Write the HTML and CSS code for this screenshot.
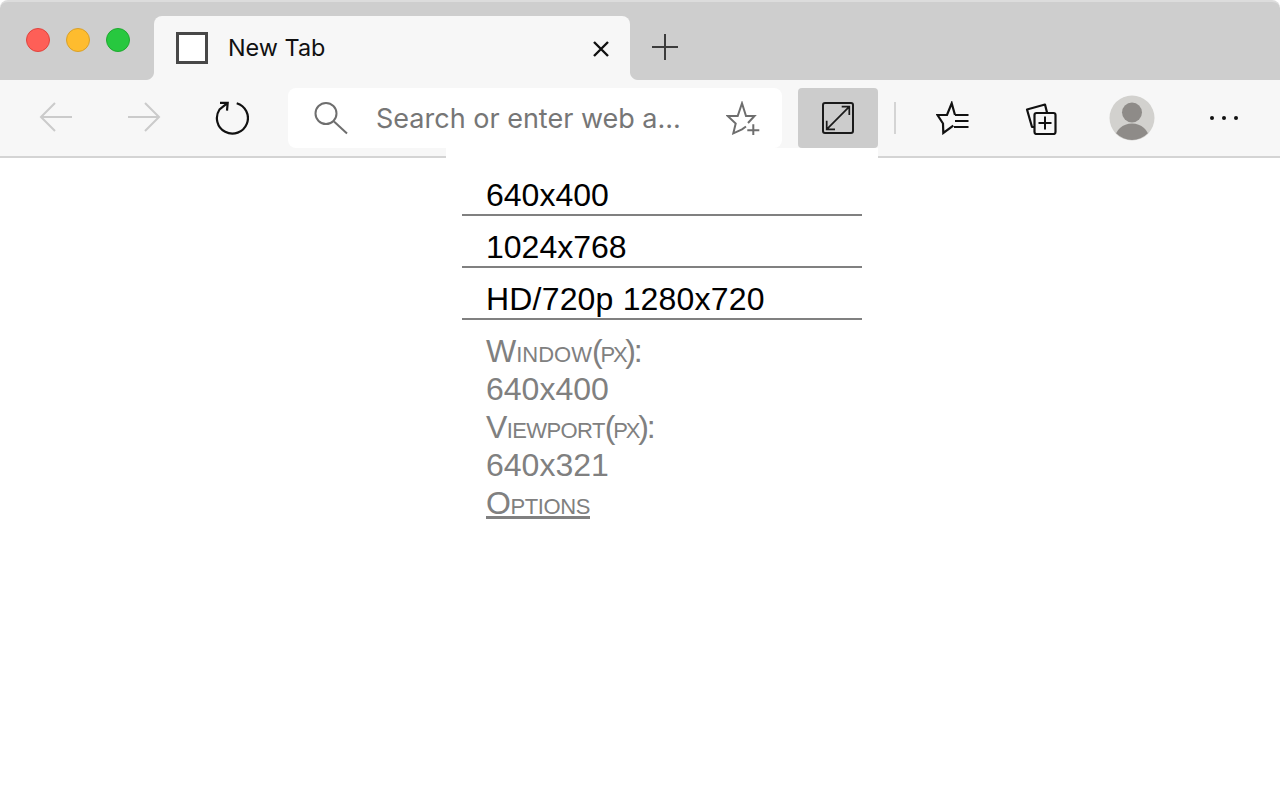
FILE: index.html
```html
<!DOCTYPE html>
<html lang="en">
<head>
<meta charset="utf-8">
<title>New Tab</title>
<link rel="stylesheet" href="styles.css">
</head>
<body>
<div class="window">
  <header class="tabstrip">
    <div class="lights">
      <span class="light red"></span>
      <span class="light yellow"></span>
      <span class="light green"></span>
    </div>
    <div class="tab">
      <span class="tab-favicon"></span>
      <span class="tab-title">New Tab</span>
      <svg class="tab-close" width="20" height="20" viewBox="0 0 20 20"><path d="M3 3l14 14M17 3L3 17" fill="none" stroke="#111" stroke-width="2.400"/></svg>
    </div>
    <svg class="new-tab" width="28" height="28" viewBox="0 0 28 28"><path d="M14 1v26M1 14h26" fill="none" stroke="#3c3c3c" stroke-width="2"/></svg>
  </header>
  <nav class="toolbar">
    <div class="tool">
      <svg class="arrow" width="34" height="30" viewBox="0 0 34 30"><path d="M33 15H2M16 1L2 15l14 14" fill="none" stroke="#cbcbcb" stroke-width="2"/></svg>
    </div>
    <div class="tool">
      <svg class="arrow" width="34" height="30" viewBox="0 0 34 30"><path d="M1 15h31M18 1l14 14-14 14" fill="none" stroke="#cbcbcb" stroke-width="2"/></svg>
    </div>
    <div class="tool">
      <svg width="34" height="36" viewBox="0 0 34 36"><path d="M21.700 3.200A15.500 15.500 0 1 1 4.500 9.500L12.700 2.800M5 2.800H12.700L12 10.700" fill="none" stroke="#111" stroke-width="2.200"/></svg>
    </div>
    <div class="address">
      <svg class="search-icon" width="34" height="34" viewBox="0 0 34 34"><circle cx="12" cy="12.500" r="10.500" fill="none" stroke="#6e6e6e" stroke-width="2"/><path d="M20 20.500L33 32.500" stroke="#6e6e6e" stroke-width="2"/></svg>
      <span class="address-text">Search or enter web a...</span>
      <svg class="star-add" width="34" height="34" viewBox="0 0 34 34"><path d="M20 25.500L16 28.300 7.300 32.300 9.700 22.500 1.700 15H11.700L16 2.300 20 15H28.500L22 22" fill="none" stroke="#6e6e6e" stroke-width="2"/><path d="M27.300 23.300v12M21.300 29.300h12" stroke="#6e6e6e" stroke-width="2"/></svg>
    </div>
    <div class="ext-button">
      <svg width="32" height="32" viewBox="0 0 32 32"><rect x="1" y="1" width="30" height="30" rx="2" fill="none" stroke="#1a1a1a" stroke-width="2"/><path d="M4.700 27.300L27.300 4.700M19.700 4.700H27.300V13M4.700 18.700V27.300H13" fill="none" stroke="#1a1a1a" stroke-width="1.700"/></svg>
    </div>
    <span class="separator"></span>
    <div class="tool">
      <svg width="34" height="34" viewBox="0 0 34 34"><path d="M19 14L15.700 2.300 11 14H1.500L7 22.500 7.300 32 17.300 24.700" fill="none" stroke="#111" stroke-width="2.200"/><path d="M19 14h13.500M19 20h13.500M18 26h14.500" stroke="#111" stroke-width="2.200"/></svg>
    </div>
    <div class="tool">
      <svg width="34" height="34" viewBox="0 0 34 34"><path d="M10 26H8L3 8.500 21 3.500 23 11.500" fill="none" stroke="#111" stroke-width="2.200" stroke-linejoin="round"/><rect x="10.500" y="12" width="21" height="21" rx="2" fill="none" stroke="#111" stroke-width="2.200"/><path d="M21 15.500v13M14.500 22h13" stroke="#111" stroke-width="2"/></svg>
    </div>
    <div class="tool profile">
      <svg width="46" height="46" viewBox="0 0 46 46"><defs><clipPath id="avatar"><circle cx="23" cy="23" r="22"/></clipPath></defs><circle cx="23" cy="23" r="22.500" fill="#d2d1ce"/><g clip-path="url(#avatar)" fill="#8e8b88"><circle cx="23" cy="17.500" r="10"/><ellipse cx="23" cy="44" rx="17" ry="15.500"/></g></svg>
    </div>
    <div class="tool more">
      <svg width="30" height="6" viewBox="0 0 30 6"><g fill="#111"><circle cx="3" cy="3" r="2"/><circle cx="15" cy="3" r="2"/><circle cx="27" cy="3" r="2"/></g></svg>
    </div>
  </nav>
  <main class="page"></main>
  <section class="popup">
    <ul class="sizes">
      <li class="size">640x400</li>
      <li class="size">1024x768</li>
      <li class="size size-long">HD/720p 1280x720</li>
    </ul>
    <div class="info">
      <div>Window<span class="unit">(px)</span>:</div>
      <div class="num">640x400</div>
      <div><span class="word">Viewport</span><span class="unit">(px)</span>:</div>
      <div class="num">640x321</div>
      <a class="options" href="#">Options</a>
    </div>
  </section>
</div>
</body>
</html>
```
FILE: styles.css
```css
* { box-sizing: border-box; }
html, body { margin: 0; padding: 0; background: #fff; }
.window { position: relative; width: 1280px; height: 800px; overflow: hidden; background: #fff; }

.tabstrip {
  display: flex;
  align-items: flex-end;
  height: 80px;
  background: #cecece;
  border-top: 2px solid #dcdcdc;
  border-radius: 8px 8px 0 0;
}
.lights { display: flex; gap: 16px; width: 154px; height: 64px; padding: 12px 0 0 26px; flex: none; }
.light { width: 24px; height: 24px; border-radius: 50%; border: 1px solid; }
.red { background: #fe5f57; border-color: #e0443e; }
.yellow { background: #febc2e; border-color: #d8a02a; }
.green { background: #27c83f; border-color: #1fa92f; }

.tab {
  position: relative;
  display: flex;
  align-items: center;
  flex: none;
  width: 476px;
  height: 64px;
  padding: 0 19px 0 22px;
  background: #f7f7f7;
  border-radius: 8px 8px 0 0;
  font: 23.400px "Inter", "Liberation Sans", sans-serif;
  color: #111;
}
.tab::before, .tab::after {
  content: "";
  position: absolute;
  bottom: 0;
  width: 8px;
  height: 8px;
}
.tab::before { left: -8px; background: radial-gradient(circle at 0 0, #cecece 7.500px, #f7f7f7 8.500px); }
.tab::after { right: -8px; background: radial-gradient(circle at 100% 0, #cecece 7.500px, #f7f7f7 8.500px); }
.tab-favicon { width: 32px; height: 32px; background: #fff; border: 3px solid #484848; flex: none; }
.tab-title { margin: 0 0 2px 20px; flex: 1; }
.tab-close { flex: none; margin-top: 1px; }
.new-tab { margin: 0 0 19px 21px; flex: none; }

.toolbar {
  display: flex;
  align-items: center;
  height: 78px;
  padding: 8px 12px;
  background: #f7f7f7;
  border-bottom: 2px solid #d4d4d4;
}
.tool { display: flex; align-items: center; justify-content: center; width: 88px; height: 60px; flex: none; }
.arrow { margin-bottom: 2px; }
.address {
  display: flex;
  align-items: center;
  width: 494px;
  height: 60px;
  margin-left: 12px;
  padding: 0 22px 0 26px;
  background: #fff;
  border-radius: 8px;
  flex: none;
}
.search-icon { flex: none; }
.address-text { flex: 1; margin-left: 28px; font: 27px "Inter", "Liberation Sans", sans-serif; color: #767676; white-space: nowrap; }
.star-add { flex: none; }
.ext-button {
  display: flex;
  align-items: center;
  justify-content: center;
  width: 80px;
  height: 60px;
  margin-left: 16px;
  background: #cccccc;
  border-radius: 4px;
  flex: none;
}
.separator { width: 2px; height: 32px; margin: 0 13px 0 16px; background: #d4d4d4; flex: none; }
.profile { margin-left: 3px; }
.more { margin-left: 4px; }

.page { height: 642px; }

.popup {
  position: absolute;
  left: 446px;
  top: 148px;
  width: 432px;
  padding: 16px 16px 0;
  background: #fff;
  font: 32px "Liberation Sans", Arial, sans-serif;
}
.sizes { list-style: none; margin: 0; padding: 0; font-kerning: none; }
.size { height: 52px; padding: 10px 0 0 24px; line-height: 42px; color: #000; border-bottom: 2px solid #808080; }
.size-long { letter-spacing: 0.180px; }
.info { padding: 12px 0 0 24px; color: #808080; line-height: 38px; font-variant: small-caps; }
.word { letter-spacing: -0.600px; }
.unit { letter-spacing: -2.200px; }
.num { font-variant: normal; }
.options { color: #808080; text-decoration: underline; letter-spacing: -0.400px; }
```
